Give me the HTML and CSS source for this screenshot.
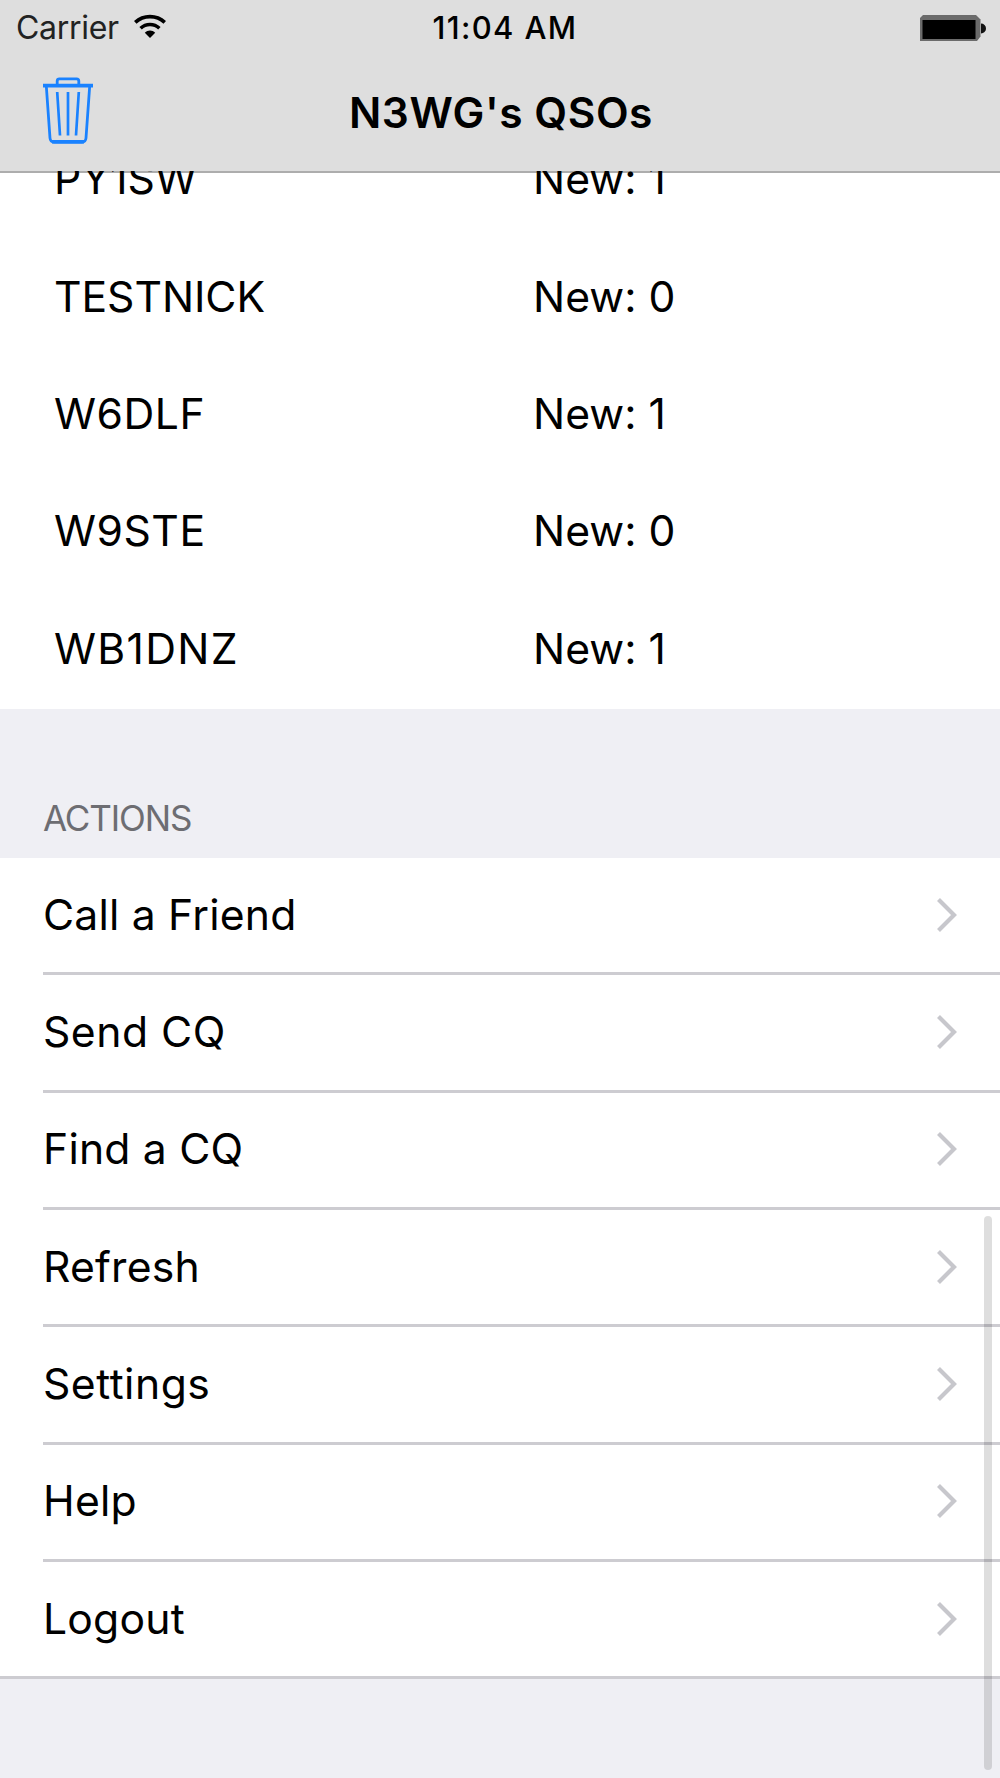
FILE: index.html
```
<!DOCTYPE html>
<html lang="en">
<head>
<meta charset="utf-8">
<title>N3WG's QSOs</title>
<link rel="stylesheet" href="styles.css">
</head>
<body>
<div class="screen">
  <header class="header">
    <div class="status">
      <div class="carrier">
        <span class="carrier-name">Carrier</span>
        <svg class="wifi" width="32" height="25" viewBox="0 0 32 25" fill="none" stroke="#000">
          <path d="M1.2 8.4C9.5.6 22.5.6 30.8 8.4" stroke-width="3.8"/>
          <path d="M6.6 14.2C12 9.200 20 9.200 25.4 14.2" stroke-width="3.6"/>
          <path d="M10.8 18.700C13.8 15.900 18.2 15.900 21.2 18.700L16 24Z" fill="#000" stroke="none"/>
        </svg>
      </div>
      <div class="time">11:04 AM</div>
      <svg class="battery" width="66" height="26" viewBox="0 0 66 26">
        <path d="M3 0H56L60.500 4.500V21.500L57 26H0V3Z" fill="#6b6b6b"/>
        <rect x="2.500" y="5" width="53" height="19" fill="#000"/>
        <path d="M61 8.500A5 5 0 0 1 61 18.500Z" fill="#111"/>
      </svg>
    </div>
    <div class="nav">
      <svg class="trash" width="50" height="67" viewBox="0 0 50 67" fill="none" stroke="#1a82ff" stroke-width="2.800">
        <path d="M14.200 7V4Q14.200 1.800 16.400 1.800H33.600Q35.800 1.800 35.800 4V7"/>
        <path d="M0 8.700H50" stroke-width="3.800"/>
        <path d="M3.300 9L7 61Q7.300 65 11 65H39Q42.700 65 43 61L46.700 9"/>
        <path d="M9 64.800H41" stroke-width="3.600"/>
        <path d="M14.200 15L17 58.500M25 15V58.500M35.800 15L33 58.500" stroke-width="2.700"/>
      </svg>
      <h1 class="title">N3WG's QSOs</h1>
    </div>
  </header>

  <main class="table">
    <ul class="qsos">
      <li class="qso"><span class="call">PY1SW</span><span class="count">New: 1</span></li>
      <li class="qso"><span class="call call-tight">TESTNICK</span><span class="count">New: 0</span></li>
      <li class="qso"><span class="call call-wide">W6DLF</span><span class="count">New: 1</span></li>
      <li class="qso"><span class="call call-wide">W9STE</span><span class="count">New: 0</span></li>
      <li class="qso"><span class="call call-widest">WB1DNZ</span><span class="count">New: 1</span></li>
    </ul>
    <h2 class="section">ACTIONS</h2>
    <ul class="actions">
      <li class="action"><span>Call a Friend</span><svg class="chevron" viewBox="0 0 20 34"><path d="M1.500 1.500L17 17L1.500 32.500"/></svg></li>
      <li class="action"><span class="wide">Send CQ</span><svg class="chevron" viewBox="0 0 20 34"><path d="M1.500 1.500L17 17L1.500 32.500"/></svg></li>
      <li class="action"><span>Find a CQ</span><svg class="chevron" viewBox="0 0 20 34"><path d="M1.500 1.500L17 17L1.500 32.500"/></svg></li>
      <li class="action"><span>Refresh</span><svg class="chevron" viewBox="0 0 20 34"><path d="M1.500 1.500L17 17L1.500 32.500"/></svg></li>
      <li class="action"><span class="wide">Settings</span><svg class="chevron" viewBox="0 0 20 34"><path d="M1.500 1.500L17 17L1.500 32.500"/></svg></li>
      <li class="action"><span>Help</span><svg class="chevron" viewBox="0 0 20 34"><path d="M1.500 1.500L17 17L1.500 32.500"/></svg></li>
      <li class="action"><span>Logout</span><svg class="chevron" viewBox="0 0 20 34"><path d="M1.500 1.500L17 17L1.500 32.500"/></svg></li>
    </ul>
  </main>
  <div class="scrollbar"></div>
</div>
</body>
</html>
```
FILE: styles.css
```
* { box-sizing: border-box; }

body {
  margin: 0;
  font-family: Inter, "Liberation Sans", sans-serif;
  color: #000;
}

.screen {
  position: relative;
  width: 1000px;
  height: 1778px;
  overflow: hidden;
  background: #efeff4;
}

ul, h1, h2 { margin: 0; padding: 0; list-style: none; }

/* Status bar and navigation bar, drawn over the scrolled table */
.header {
  position: relative;
  z-index: 1;
  height: 173px;
  background: #dedede;
  background-clip: padding-box;
  border-bottom: 2px solid rgba(0, 0, 0, 0.32);
}

.status {
  display: grid;
  grid-template-columns: 1fr auto 1fr;
  align-items: center;
  height: 55px;
  padding: 0 16px;
}

.carrier { display: flex; align-items: center; gap: 15px; }
.carrier-name { font-size: 32px; letter-spacing: -0.3px; color: #222; }
.wifi { margin-top: -3px; }
.time { font-size: 31px; font-weight: 500; letter-spacing: 1.35px; margin-left: 10px; }
.battery { justify-self: end; margin-right: -2px; }

.nav {
  display: grid;
  grid-template-columns: 1fr auto 1fr;
  align-items: center;
  height: 114px;
  padding: 0 43px;
}
.trash { margin-top: -3px; }
.title {
  padding-left: 2px;
  font-size: 42.5px;
  font-weight: 600;
  letter-spacing: 0.55px;
}

/* The first row is partly scrolled under the header */
.table { margin-top: -50.67px; }

.qsos { background: #fff; }
.qso {
  display: grid;
  grid-template-columns: 479px 1fr;
  align-items: center;
  height: 117.33px;
  padding: 0 54px 4.6px;
  font-size: 42.67px;
  letter-spacing: 0;
}
.call-tight { letter-spacing: -0.05px; }
.call-wide { letter-spacing: 0.5px; }
.call-widest { letter-spacing: 1.3px; }

.section {
  height: 149px;
  padding: 88px 43px 0;
  font-size: 35px;
  font-weight: 400;
  line-height: 42px;
  letter-spacing: -1.1px;
  color: #6d6d72;
}

.actions { background: #fff; }
.action {
  display: flex;
  align-items: center;
  justify-content: space-between;
  height: 117.33px;
  margin-left: 43px;
  padding: 0 43.5px 2px 0;
  border-bottom: 3px solid #cdccd1;
  font-size: 42.67px;
  letter-spacing: 0.2px;
}
.action:last-child { margin-left: 0; padding-left: 43px; }
.wide { letter-spacing: 0.5px; }

.chevron {
  width: 20px;
  height: 34px;
  margin-top: 1px;
  fill: none;
  stroke: #c7c7cc;
  stroke-width: 4.2px;
}

.scrollbar {
  position: absolute;
  z-index: 2;
  top: 1216px;
  left: 984px;
  width: 8px;
  height: 554px;
  border-radius: 4px;
  background: rgba(0, 0, 0, 0.13);
}
```
